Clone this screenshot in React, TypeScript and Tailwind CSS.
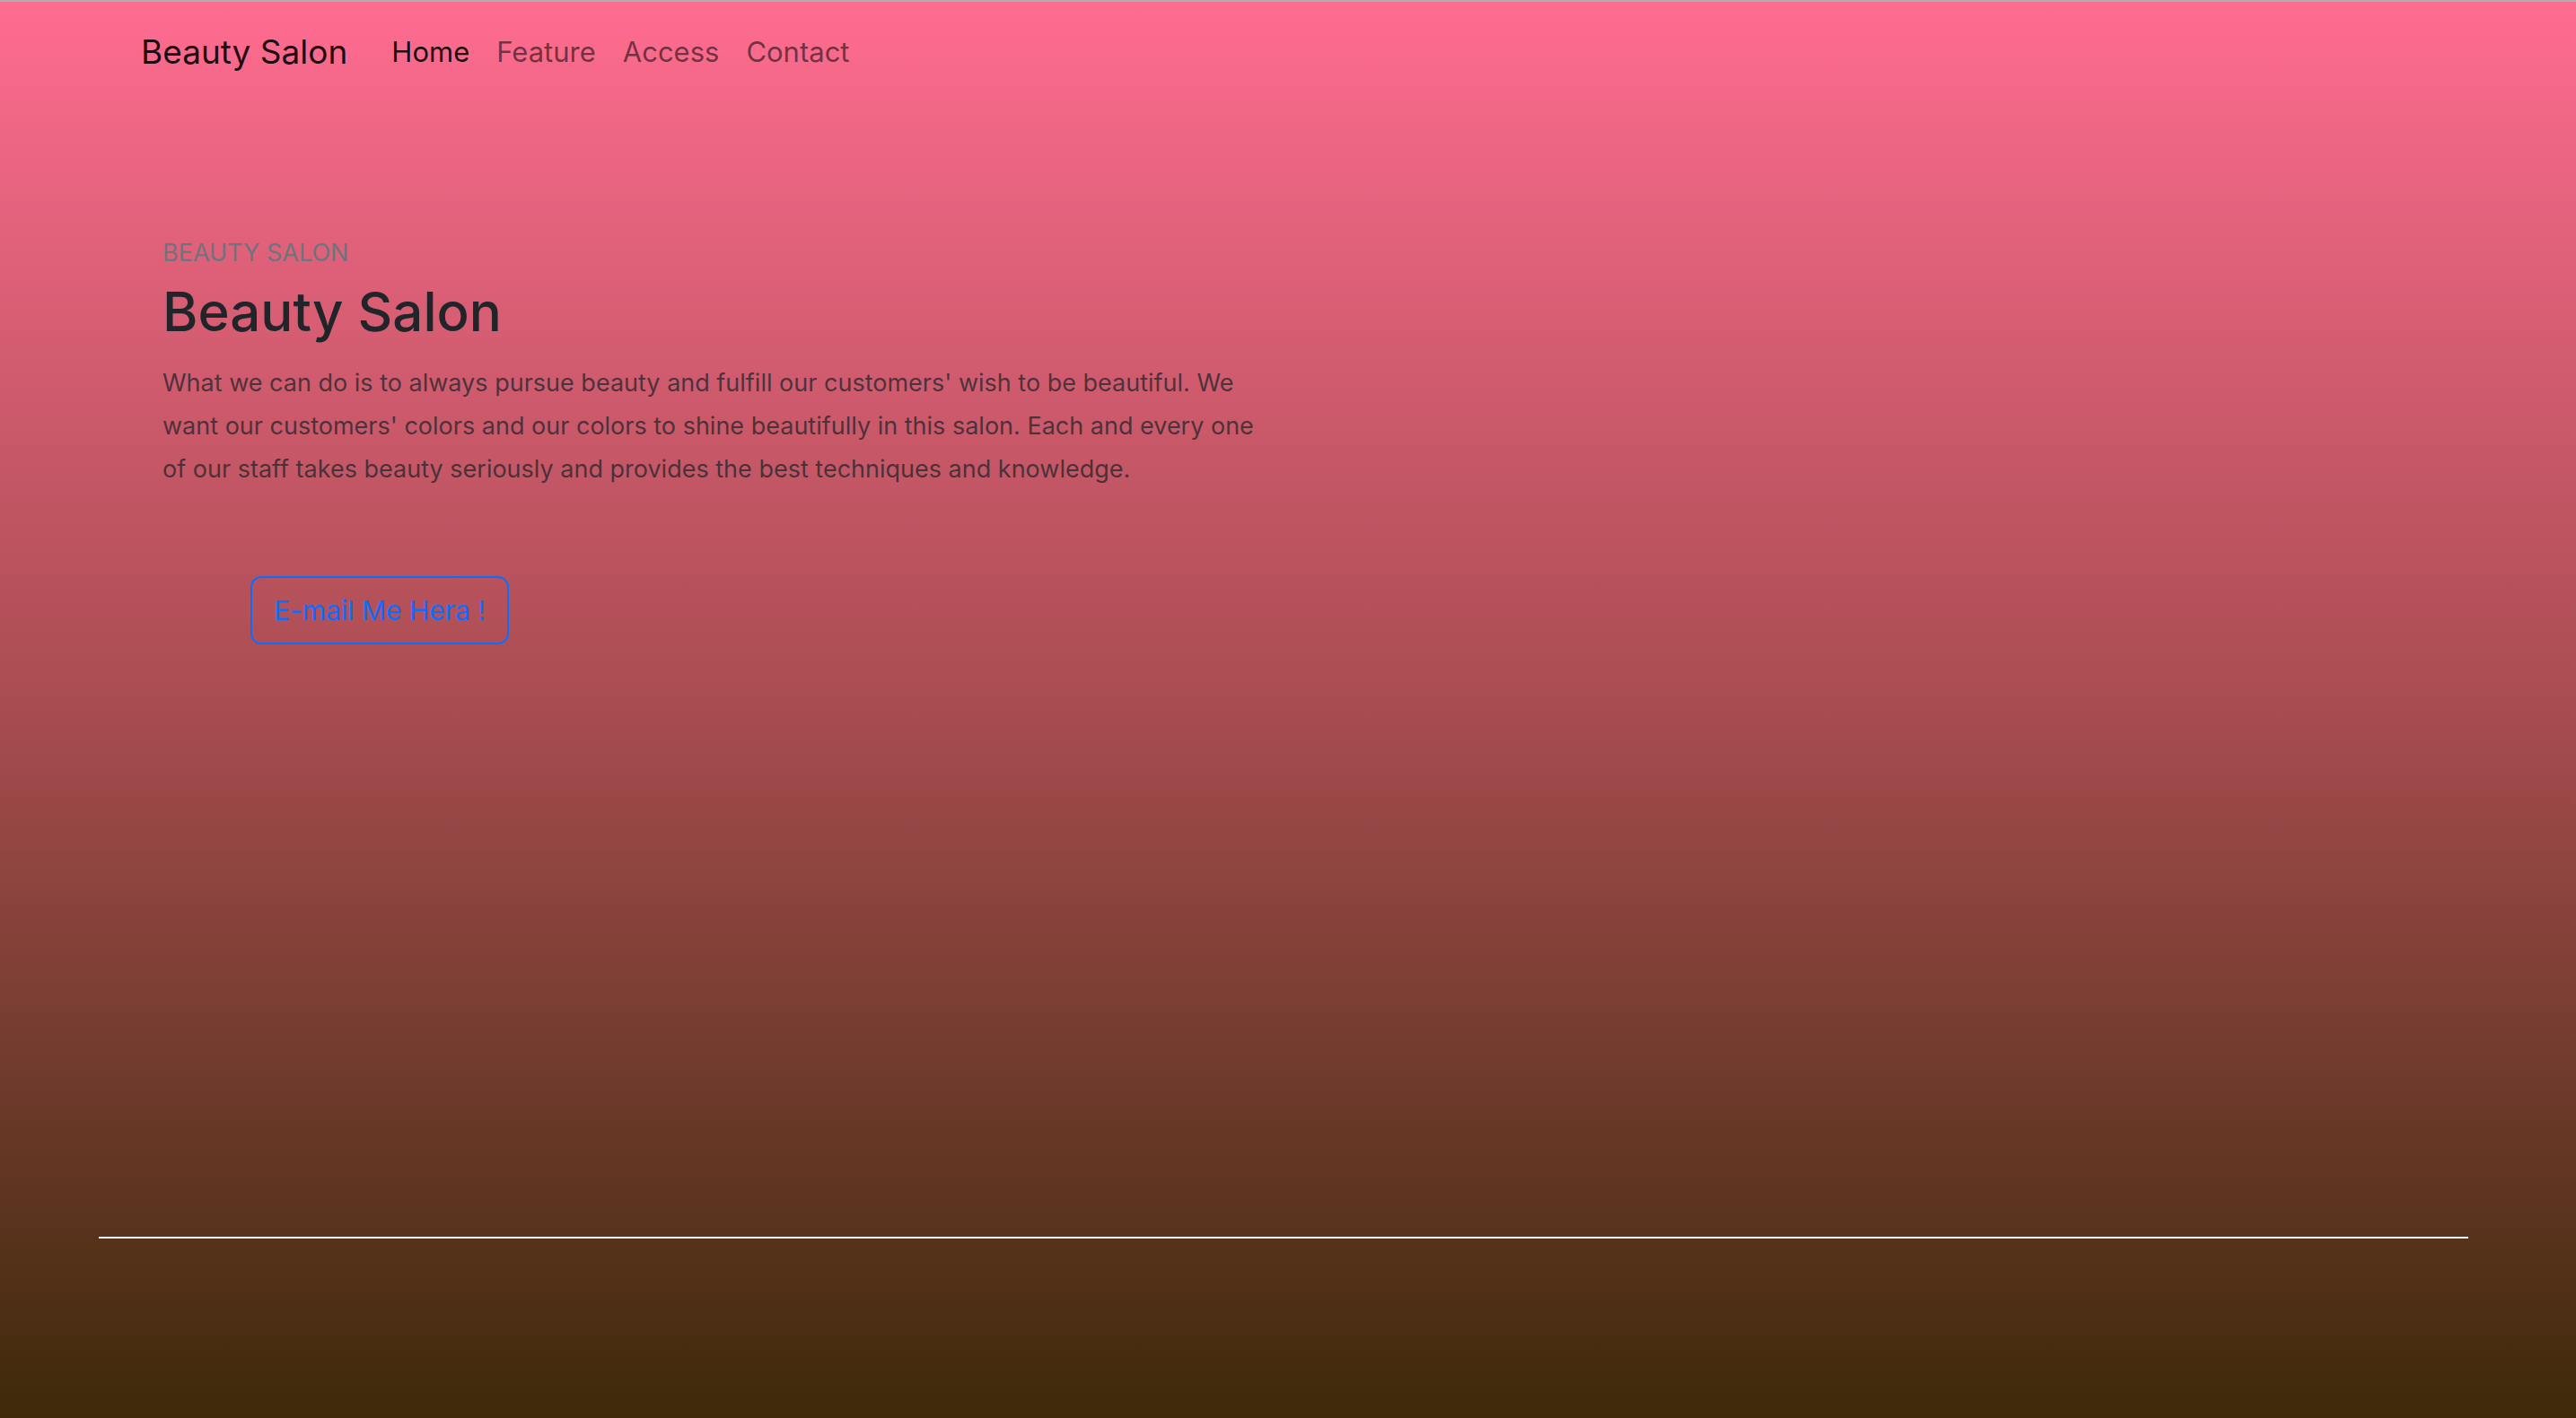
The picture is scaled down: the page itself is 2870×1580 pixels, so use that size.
const links = ["Home", "Feature", "Access", "Contact"];

const App = () => {
  return (
    <div className="flex flex-col h-[1580px] w-full border-t-2 border-[#adb0b1] bg-linear-to-b from-[#ff6c91] via-[#a84c50] to-[#3e2909] font-['Inter','Noto_Sans',sans-serif]">
      <nav className="flex items-center pl-[157px] pt-[26px]">
        <a className="mr-[34px] text-[37px] leading-[60px] text-black/90">Beauty Salon</a>
        <ul className="flex items-center">
          {links.map((item, i) => (
            <li key={item}>
              <a
                className={
                  "px-[15px] text-[31px] leading-[48px] " +
                  (i === 0 ? "text-black/90" : "text-black/55")
                }
              >
                {item}
              </a>
            </li>
          ))}
        </ul>
      </nav>

      <section className="mt-[173px] pl-[181px]">
        <p className="text-[27px] leading-[42px] text-[#6c757d] uppercase">Beauty Salon</p>
        <h1 className="mt-[6px] text-[60px] leading-[76px] font-medium text-[#212529]">Beauty Salon</h1>
        <p className="mt-[18px] w-[1232px] text-[27px] leading-[48px] text-[#212529]/75">
          What we can do is to always pursue beauty and fulfill our customers' wish to be beautiful. We
          want our customers' colors and our colors to shine beautifully in this salon. Each and every one
          of our staff takes beauty seriously and provides the best techniques and knowledge.
        </p>
        <button className="mt-[95px] ml-[98px] rounded-[12px] border-2 border-[#0d6efd] px-[24px] py-[12px] text-[30px] leading-[48px] text-[#0d6efd]">
          E-mail Me Hera !
        </button>
      </section>

      <hr className="mt-auto mb-[200px] ml-[110px] mr-[120px] h-[2px] border-0 bg-white" />
    </div>
  );
};

export default App;
